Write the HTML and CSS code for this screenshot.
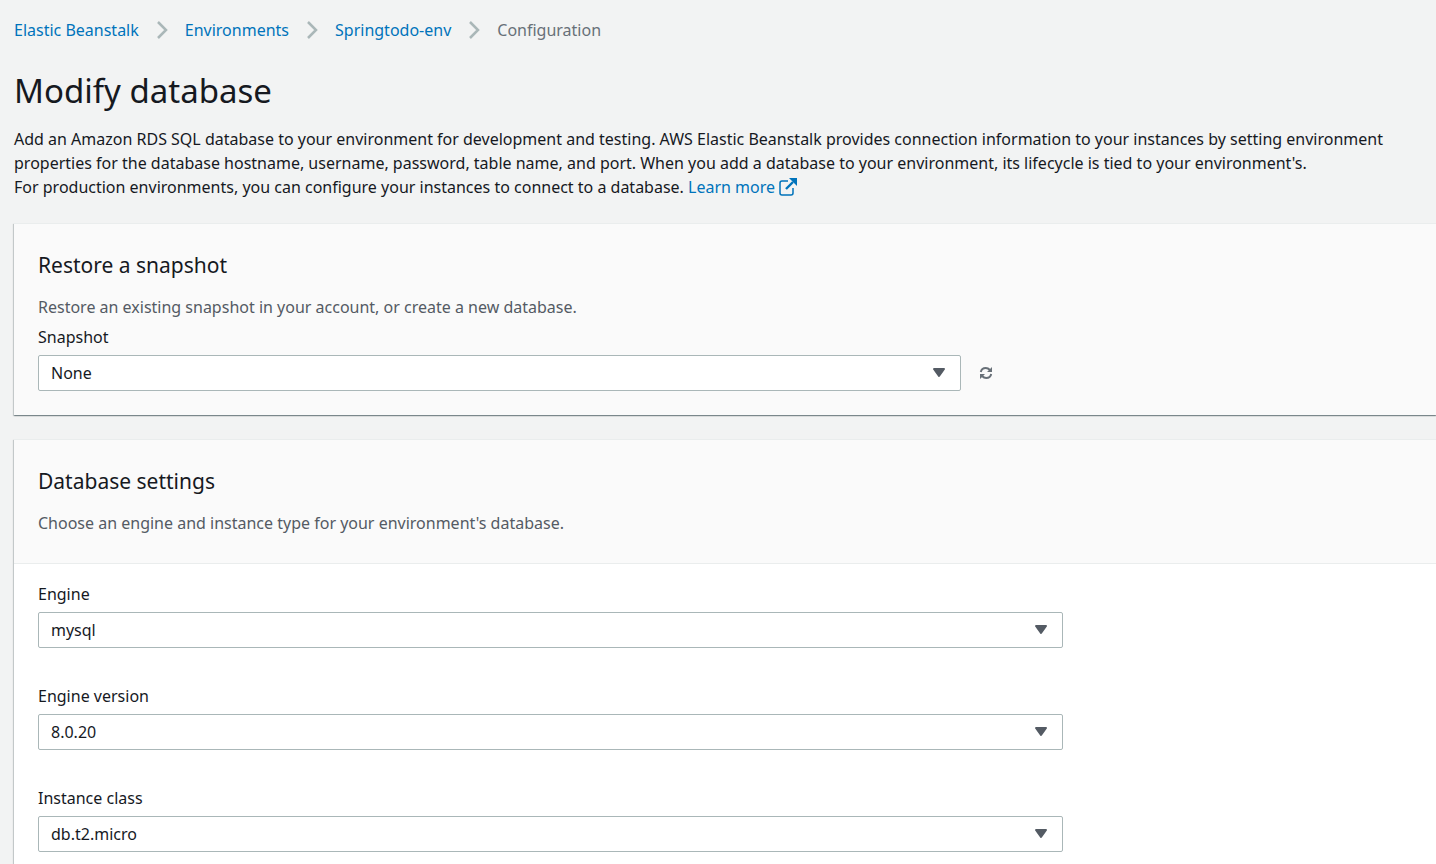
FILE: index.html
```html
<!DOCTYPE html>
<html lang="en">
<head>
<meta charset="utf-8">
<meta name="viewport" content="width=device-width, initial-scale=1">
<title>Modify database</title>
<link rel="stylesheet" href="styles.css">
</head>
<body>
<main class="page">
  <nav class="breadcrumbs" aria-label="Breadcrumbs">
    <a class="link" href="#">Elastic Beanstalk</a>
    <svg class="chevron" viewBox="0 0 12 20" stroke-width="2.5" aria-hidden="true"><path d="M2 2l8 8-8 8"/></svg>
    <a class="link" href="#">Environments</a>
    <svg class="chevron" viewBox="0 0 12 20" stroke-width="2.5" aria-hidden="true"><path d="M2 2l8 8-8 8"/></svg>
    <a class="link" href="#">Springtodo-env</a>
    <svg class="chevron" viewBox="0 0 12 20" stroke-width="2.5" aria-hidden="true"><path d="M2 2l8 8-8 8"/></svg>
    <span class="current">Configuration</span>
  </nav>

  <h1 class="title">Modify database</h1>
  <p class="intro">Add an Amazon RDS SQL database to your environment for development and testing. AWS Elastic Beanstalk provides connection information to your instances by setting environment<br>properties for the database hostname, username, password, table name, and port. When you add a database to your environment, its lifecycle is tied to your environment's.<br>For production environments, you can configure your instances to connect to a database. <a class="link" href="#">Learn more <svg class="external" viewBox="0 0 18 18" aria-hidden="true"><path class="external-line" stroke-width="1.5" d="M9 3H3Q1 3 1 5v10Q1 17 3 17h9q2 0 2-2V10"/><path class="external-line" stroke-width="2.4" d="M7 11l7-7"/><path class="external-head" d="M10 0h8v8z"/></svg></a></p>

  <section class="card">
    <div class="card-header">
      <h2 class="heading">Restore a snapshot</h2>
      <p class="description">Restore an existing snapshot in your account, or create a new database.</p>
      <div class="field field-snapshot">
        <label class="label" for="snapshot">Snapshot</label>
        <div class="control-row">
          <div class="select-box">
            <select class="select" id="snapshot"><option>None</option></select>
            <svg class="arrow" viewBox="0 0 14 12" aria-hidden="true"><path d="M2 2h10L7 9z"/></svg>
          </div>
          <button class="refresh" type="button" aria-label="Refresh snapshots">
            <svg class="refresh-icon" viewBox="0 0 14 14" aria-hidden="true"><path class="refresh-line" d="M1.800 6Q2.600 2 6.800 2Q9 2 11 4M12.200 8Q11.400 12 7.200 12Q5 12 3 10"/><path class="refresh-head" d="M13 1v5H8zM1 13V8h5z"/></svg>
          </button>
        </div>
      </div>
    </div>
  </section>

  <section class="card">
    <div class="card-header card-header-ruled">
      <h2 class="heading">Database settings</h2>
      <p class="description">Choose an engine and instance type for your environment's database.</p>
    </div>
    <div class="card-body">
      <div class="field">
        <label class="label" for="engine">Engine</label>
        <div class="select-box">
          <select class="select" id="engine"><option>mysql</option></select>
          <svg class="arrow" viewBox="0 0 14 12" aria-hidden="true"><path d="M2 2h10L7 9z"/></svg>
        </div>
      </div>
      <div class="field">
        <label class="label" for="version">Engine version</label>
        <div class="select-box">
          <select class="select" id="version"><option>8.0.20</option></select>
          <svg class="arrow" viewBox="0 0 14 12" aria-hidden="true"><path d="M2 2h10L7 9z"/></svg>
        </div>
      </div>
      <div class="field">
        <label class="label" for="instance">Instance class</label>
        <div class="select-box">
          <select class="select" id="instance"><option>db.t2.micro</option></select>
          <svg class="arrow" viewBox="0 0 14 12" aria-hidden="true"><path d="M2 2h10L7 9z"/></svg>
        </div>
      </div>
    </div>
  </section>
</main>
</body>
</html>
```

FILE: styles.css
```css
* {
  box-sizing: border-box;
}

body {
  margin: 0;
  background: #f2f3f3;
  color: #16191f;
  font: 16px/24px "Noto Sans", sans-serif;
}

.page {
  padding: 18px 0 0 14px;
  overflow-x: clip;
}

.link {
  color: #0073bb;
  text-decoration: none;
}

.breadcrumbs {
  display: flex;
  align-items: center;
  gap: 17px;
}

.current {
  color: #687078;
}

.chevron {
  width: 12px;
  height: 20px;
  fill: none;
  stroke: #aab7b8;
}

.title {
  margin: 28px 0 15px;
  font-size: 33px;
  font-weight: 400;
  line-height: 42px;
}

.intro {
  margin: 0;
}

.external {
  width: 18px;
  height: 18px;
  vertical-align: -3px;
}

.external-line {
  fill: none;
  stroke: #0073bb;
}

.external-head {
  fill: #0073bb;
}

.card {
  margin-top: 24px;
  background: #fff;
  border-top: 1px solid #eaeded;
  box-shadow: 0 1px 1px rgba(0, 28, 36, 0.3), 1px 1px 1px rgba(0, 28, 36, 0.15), -1px 1px 1px rgba(0, 28, 36, 0.15);
}

.card-header {
  padding: 27px 24px 24px;
  background: #fafafa;
}

.card-header-ruled {
  border-bottom: 1px solid #eaeded;
  padding-bottom: 28px;
}

.heading {
  margin: 0;
  font-size: 21px;
  font-weight: 400;
  line-height: 28px;
}

.description {
  margin: 16px 0 0;
  color: #545b64;
}

.card-body {
  display: grid;
  gap: 36px;
  padding: 18px 24px 36px;
}

.field {
  display: flex;
  flex-direction: column;
  gap: 6px;
  width: 100%;
  max-width: 1025px;
}

.field-snapshot {
  margin-top: 6px;
}

.control-row {
  display: grid;
  grid-template-columns: 9fr 1fr;
  align-items: center;
}

.select-box {
  display: grid;
  align-items: center;
}

.select {
  grid-area: 1 / 1;
  width: 100%;
  height: 36px;
  padding: 0 40px 0 12px;
  border: 1px solid #aab7b8;
  border-radius: 2px;
  background: #fff;
  color: #16191f;
  font: inherit;
  appearance: none;
}

.arrow {
  grid-area: 1 / 1;
  justify-self: end;
  width: 14px;
  height: 12px;
  margin-right: 15px;
  fill: #545b64;
  stroke: #545b64;
  stroke-width: 2;
  stroke-linejoin: round;
  pointer-events: none;
}

.refresh {
  display: flex;
  justify-self: start;
  padding: 8px 18px;
  border: 0;
  background: none;
}

.refresh-icon {
  width: 14px;
  height: 14px;
}

.refresh-line {
  fill: none;
  stroke: #687078;
  stroke-width: 2;
}

.refresh-head {
  fill: #687078;
}
```
